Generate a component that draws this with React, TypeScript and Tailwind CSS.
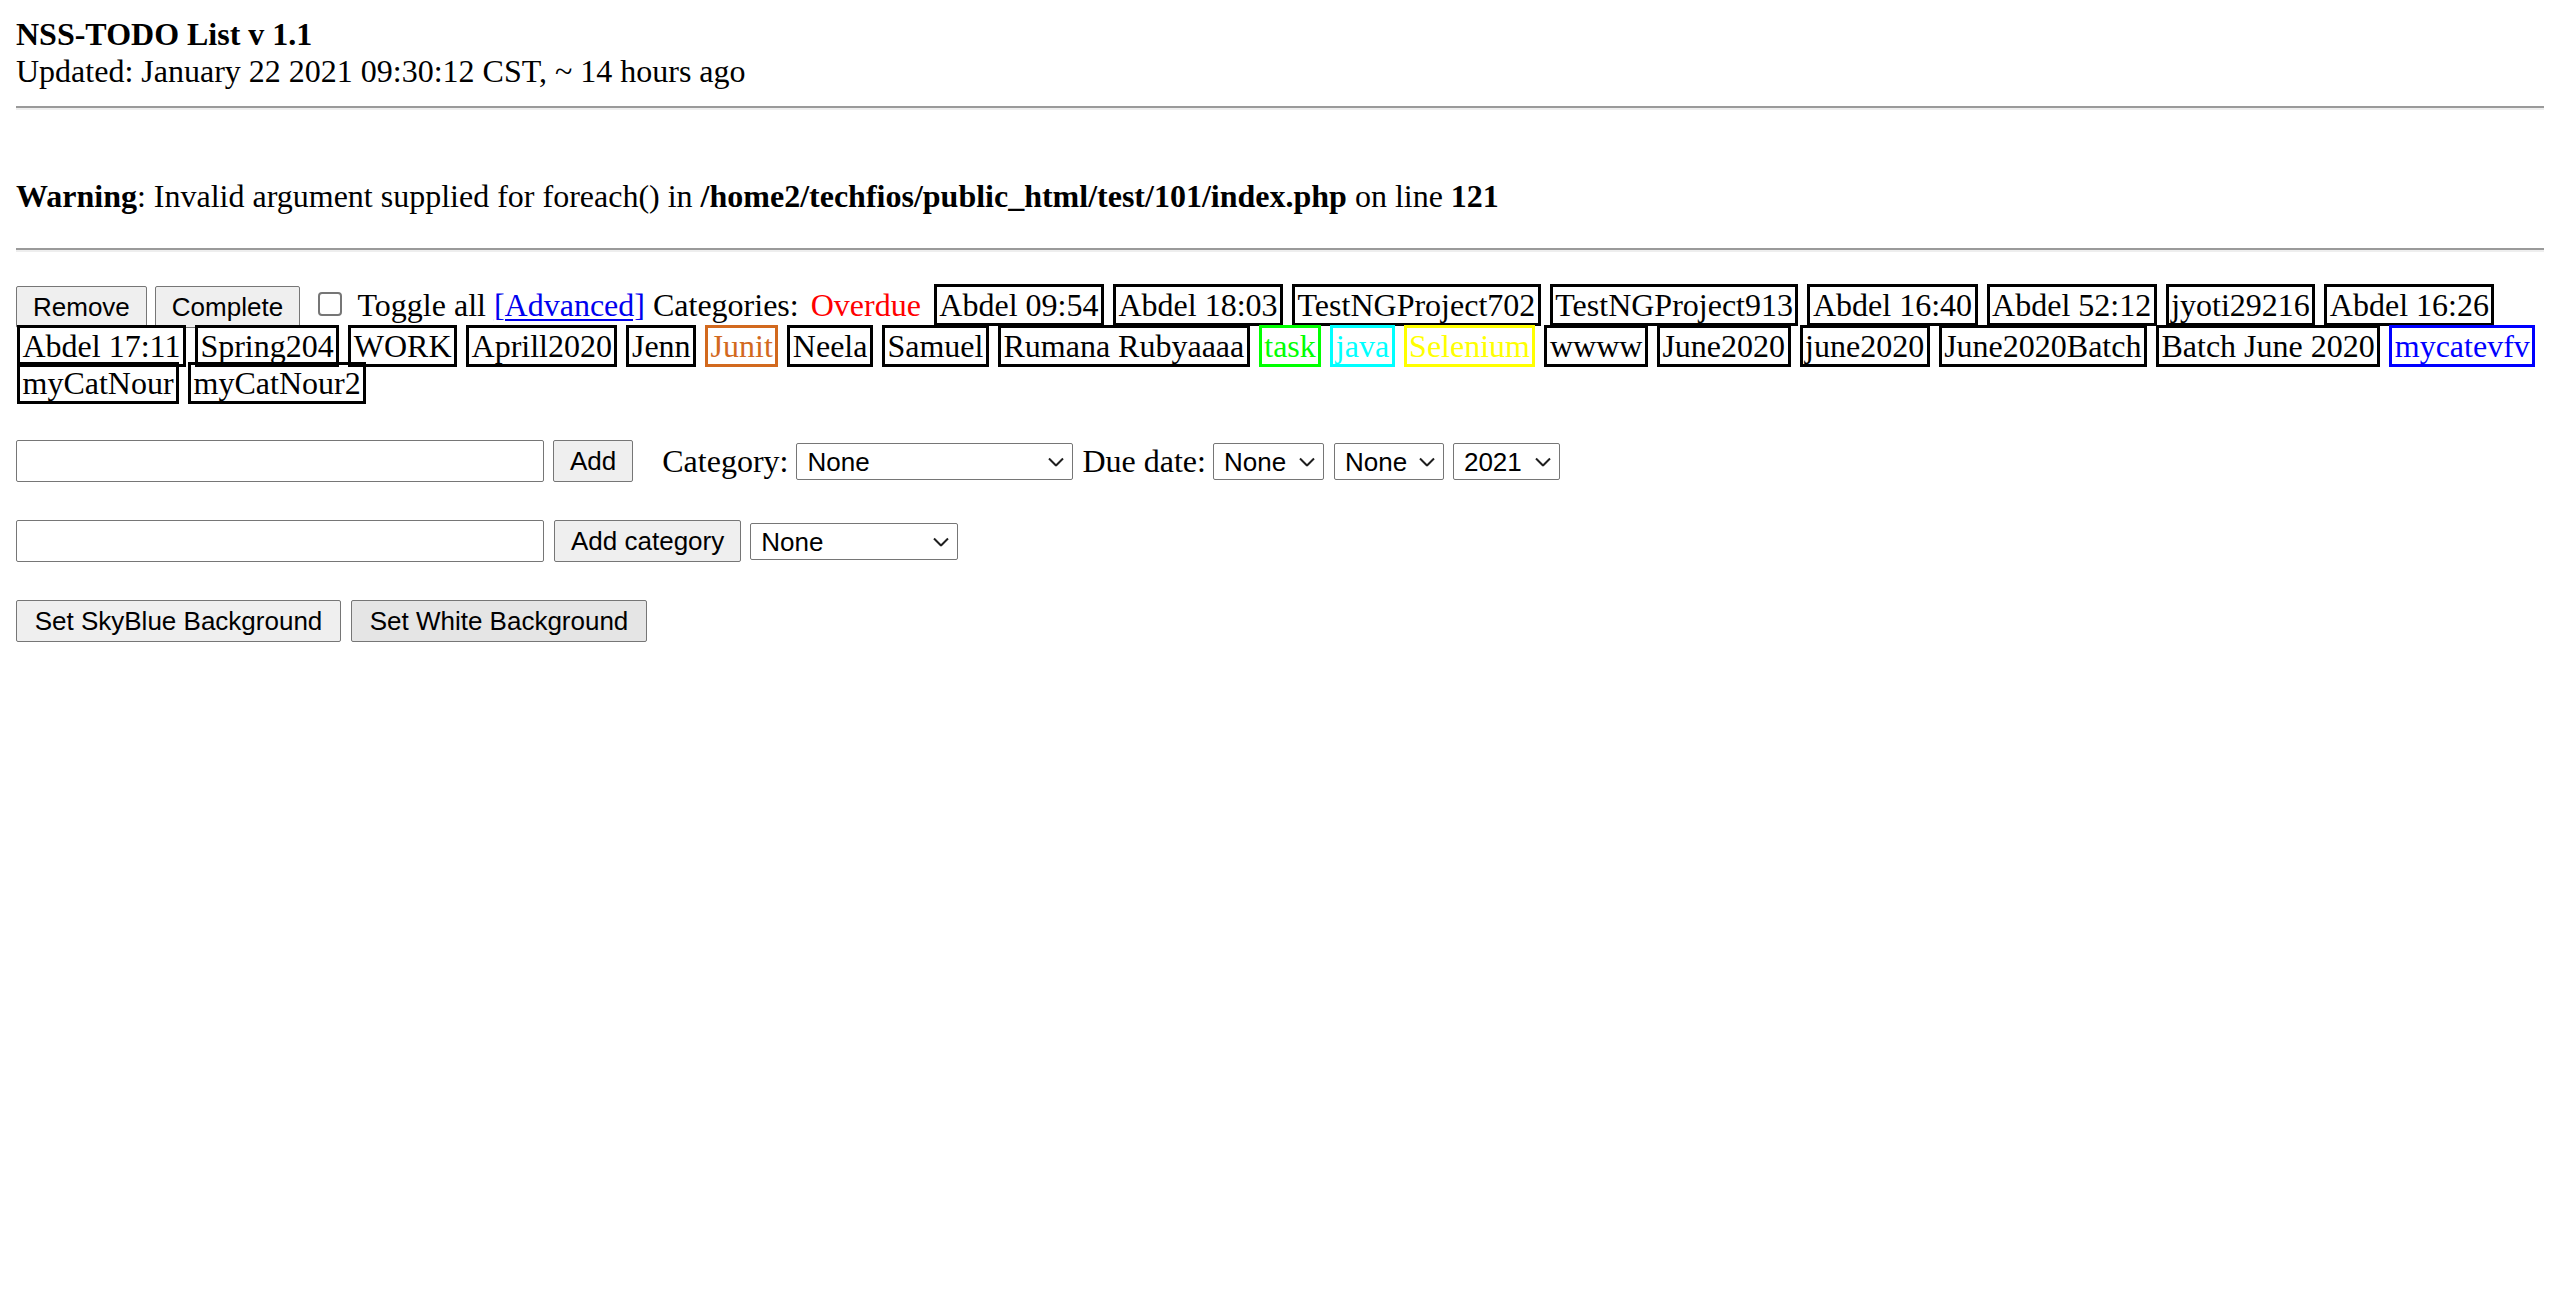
import React from "react";

type Tag = { t: string; c?: string };

const tags: Tag[] = [
  { t: "Abdel 09:54" },
  { t: "Abdel 18:03" },
  { t: "TestNGProject702" },
  { t: "TestNGProject913" },
  { t: "Abdel 16:40" },
  { t: "Abdel 52:12" },
  { t: "jyoti29216" },
  { t: "Abdel 16:26" },
  { t: "Abdel 17:11" },
  { t: "Spring204" },
  { t: "WORK" },
  { t: "Aprill2020" },
  { t: "Jenn" },
  { t: "Junit", c: "junit" },
  { t: "Neela" },
  { t: "Samuel" },
  { t: "Rumana Rubyaaaa" },
  { t: "task", c: "lime" },
  { t: "java", c: "cyan" },
  { t: "Selenium", c: "yellow" },
  { t: "wwww" },
  { t: "June2020" },
  { t: "june2020" },
  { t: "June2020Batch" },
  { t: "Batch June 2020" },
  { t: "mycatevfv", c: "blue" },
  { t: "myCatNour" },
  { t: "myCatNour2" },
];

function tagClass(c?: string) {
  switch (c) {
    case "junit":
      return "border-[#d2691e] text-[#d2691e]";
    case "lime":
      return "border-[#00ff00] text-[#00ff00]";
    case "cyan":
      return "border-[#00ffff] text-[#00ffff]";
    case "yellow":
      return "border-[#ffff00] text-[#ffff00]";
    case "blue":
      return "border-[#0000ff] text-[#0000ff]";
    default:
      return "border-black text-black";
  }
}

function Btn({ children, className = "" }: { children: React.ReactNode; className?: string }) {
  return (
    <button
      className={
        "h-[42px] rounded-[2px] border border-[#767676] px-[16px] py-[5px] text-[26px] leading-[30px] text-black [font-family:'Liberation_Sans',Arial,sans-serif] " +
        (className || "bg-[#efefef]")
      }
    >
      {children}
    </button>
  );
}

function Chevron() {
  return (
    <svg
      className="pointer-events-none absolute right-[9px] top-1/2 -translate-y-1/2"
      width="16"
      height="9"
      viewBox="0 0 16 9"
    >
      <path d="M1 1l7 7 7-7" stroke="#1f1f1f" strokeWidth="2" fill="none" />
    </svg>
  );
}

function Sel({ w, value }: { w: string; value: string }) {
  return (
    <span className={"relative inline-flex shrink-0 " + w}>
      <select
        defaultValue={value}
        className="h-[37px] w-full appearance-none rounded-[2px] border border-[#767676] bg-white pl-[10px] text-[26px] leading-[30px] text-black outline-none [font-family:'Liberation_Sans',Arial,sans-serif]"
      >
        <option>{value}</option>
      </select>
      <Chevron />
    </span>
  );
}

function TextBox() {
  return (
    <input
      type="text"
      className="h-[42px] w-[528px] shrink-0 rounded-[2px] border border-[#767676] bg-white px-[4px] text-[26px] outline-none [font-family:'Liberation_Sans',Arial,sans-serif]"
    />
  );
}

function Hr({ className = "" }: { className?: string }) {
  return <div className={"border-t-2 border-b-2 border-t-[#9a9a9a] border-b-[#eeeeee] " + className} />;
}

export default function App() {
  return (
    <div className="min-h-screen bg-white p-[16px] text-[32px] leading-[normal] text-black [font-family:'Liberation_Serif','Times_New_Roman',serif]">
      <div className="font-bold">NSS-TODO List v 1.1</div>
      <div>Updated: January 22 2021 09:30:12 CST, ~ 14 hours ago</div>
      <Hr className="mt-[16px]" />

      <div className="mt-[68px]">
        <b>Warning</b>: Invalid argument supplied for foreach() in{" "}
        <b>/home2/techfios/public_html/test/101/index.php</b> on line <b>121</b>
      </div>
      <Hr className="mt-[33px]" />

      <div className="mt-[34px]">
        <Btn>Remove</Btn> <Btn>Complete</Btn>{" "}
        <input
          type="checkbox"
          className="ml-[10px] mr-[8px] inline-block h-[24px] w-[24px] appearance-none rounded-[4px] border-2 border-[#767676] bg-white align-baseline"
        />{" "}
        Toggle all{" "}
        <a href="#" className="text-[#0000ee] underline decoration-2 underline-offset-[3px]">
          [Advanced]
        </a>{" "}
        Categories:{" "}
        <span className="border-[3px] border-transparent px-[1px] text-[#ff0000]">Overdue</span>{" "}
        {tags.map((tg, i) => (
          <React.Fragment key={i}>
            <span className={"ml-[1px] border-[3px] px-[2.5px] " + tagClass(tg.c)}>{tg.t}</span>{" "}
          </React.Fragment>
        ))}
      </div>

      <div className="mt-[38px] flex h-[42px] items-center">
        <TextBox />
        <div className="ml-[9px]">
          <Btn>Add</Btn>
        </div>
        <span className="ml-[29px] whitespace-nowrap">Category:</span>
        <div className="ml-[8px]">
          <Sel w="w-[277px]" value="None" />
        </div>
        <span className="ml-[9px] whitespace-nowrap">Due date:</span>
        <div className="ml-[7px]">
          <Sel w="w-[111px]" value="None" />
        </div>
        <div className="ml-[10px]">
          <Sel w="w-[110px]" value="None" />
        </div>
        <div className="ml-[9px]">
          <Sel w="w-[107px]" value="2021" />
        </div>
      </div>

      <div className="mt-[38px] flex h-[42px] items-center">
        <TextBox />
        <div className="ml-[10px]">
          <Btn>Add category</Btn>
        </div>
        <div className="ml-[9px]">
          <Sel w="w-[208px]" value="None" />
        </div>
      </div>

      <div className="mt-[38px] flex h-[42px] items-center">
        <Btn className="w-[325px] bg-[#efefef]">Set SkyBlue Background</Btn>
        <div className="ml-[10px]">
          <Btn className="w-[296px] bg-[#e5e5e5]">Set White Background</Btn>
        </div>
      </div>
    </div>
  );
}
